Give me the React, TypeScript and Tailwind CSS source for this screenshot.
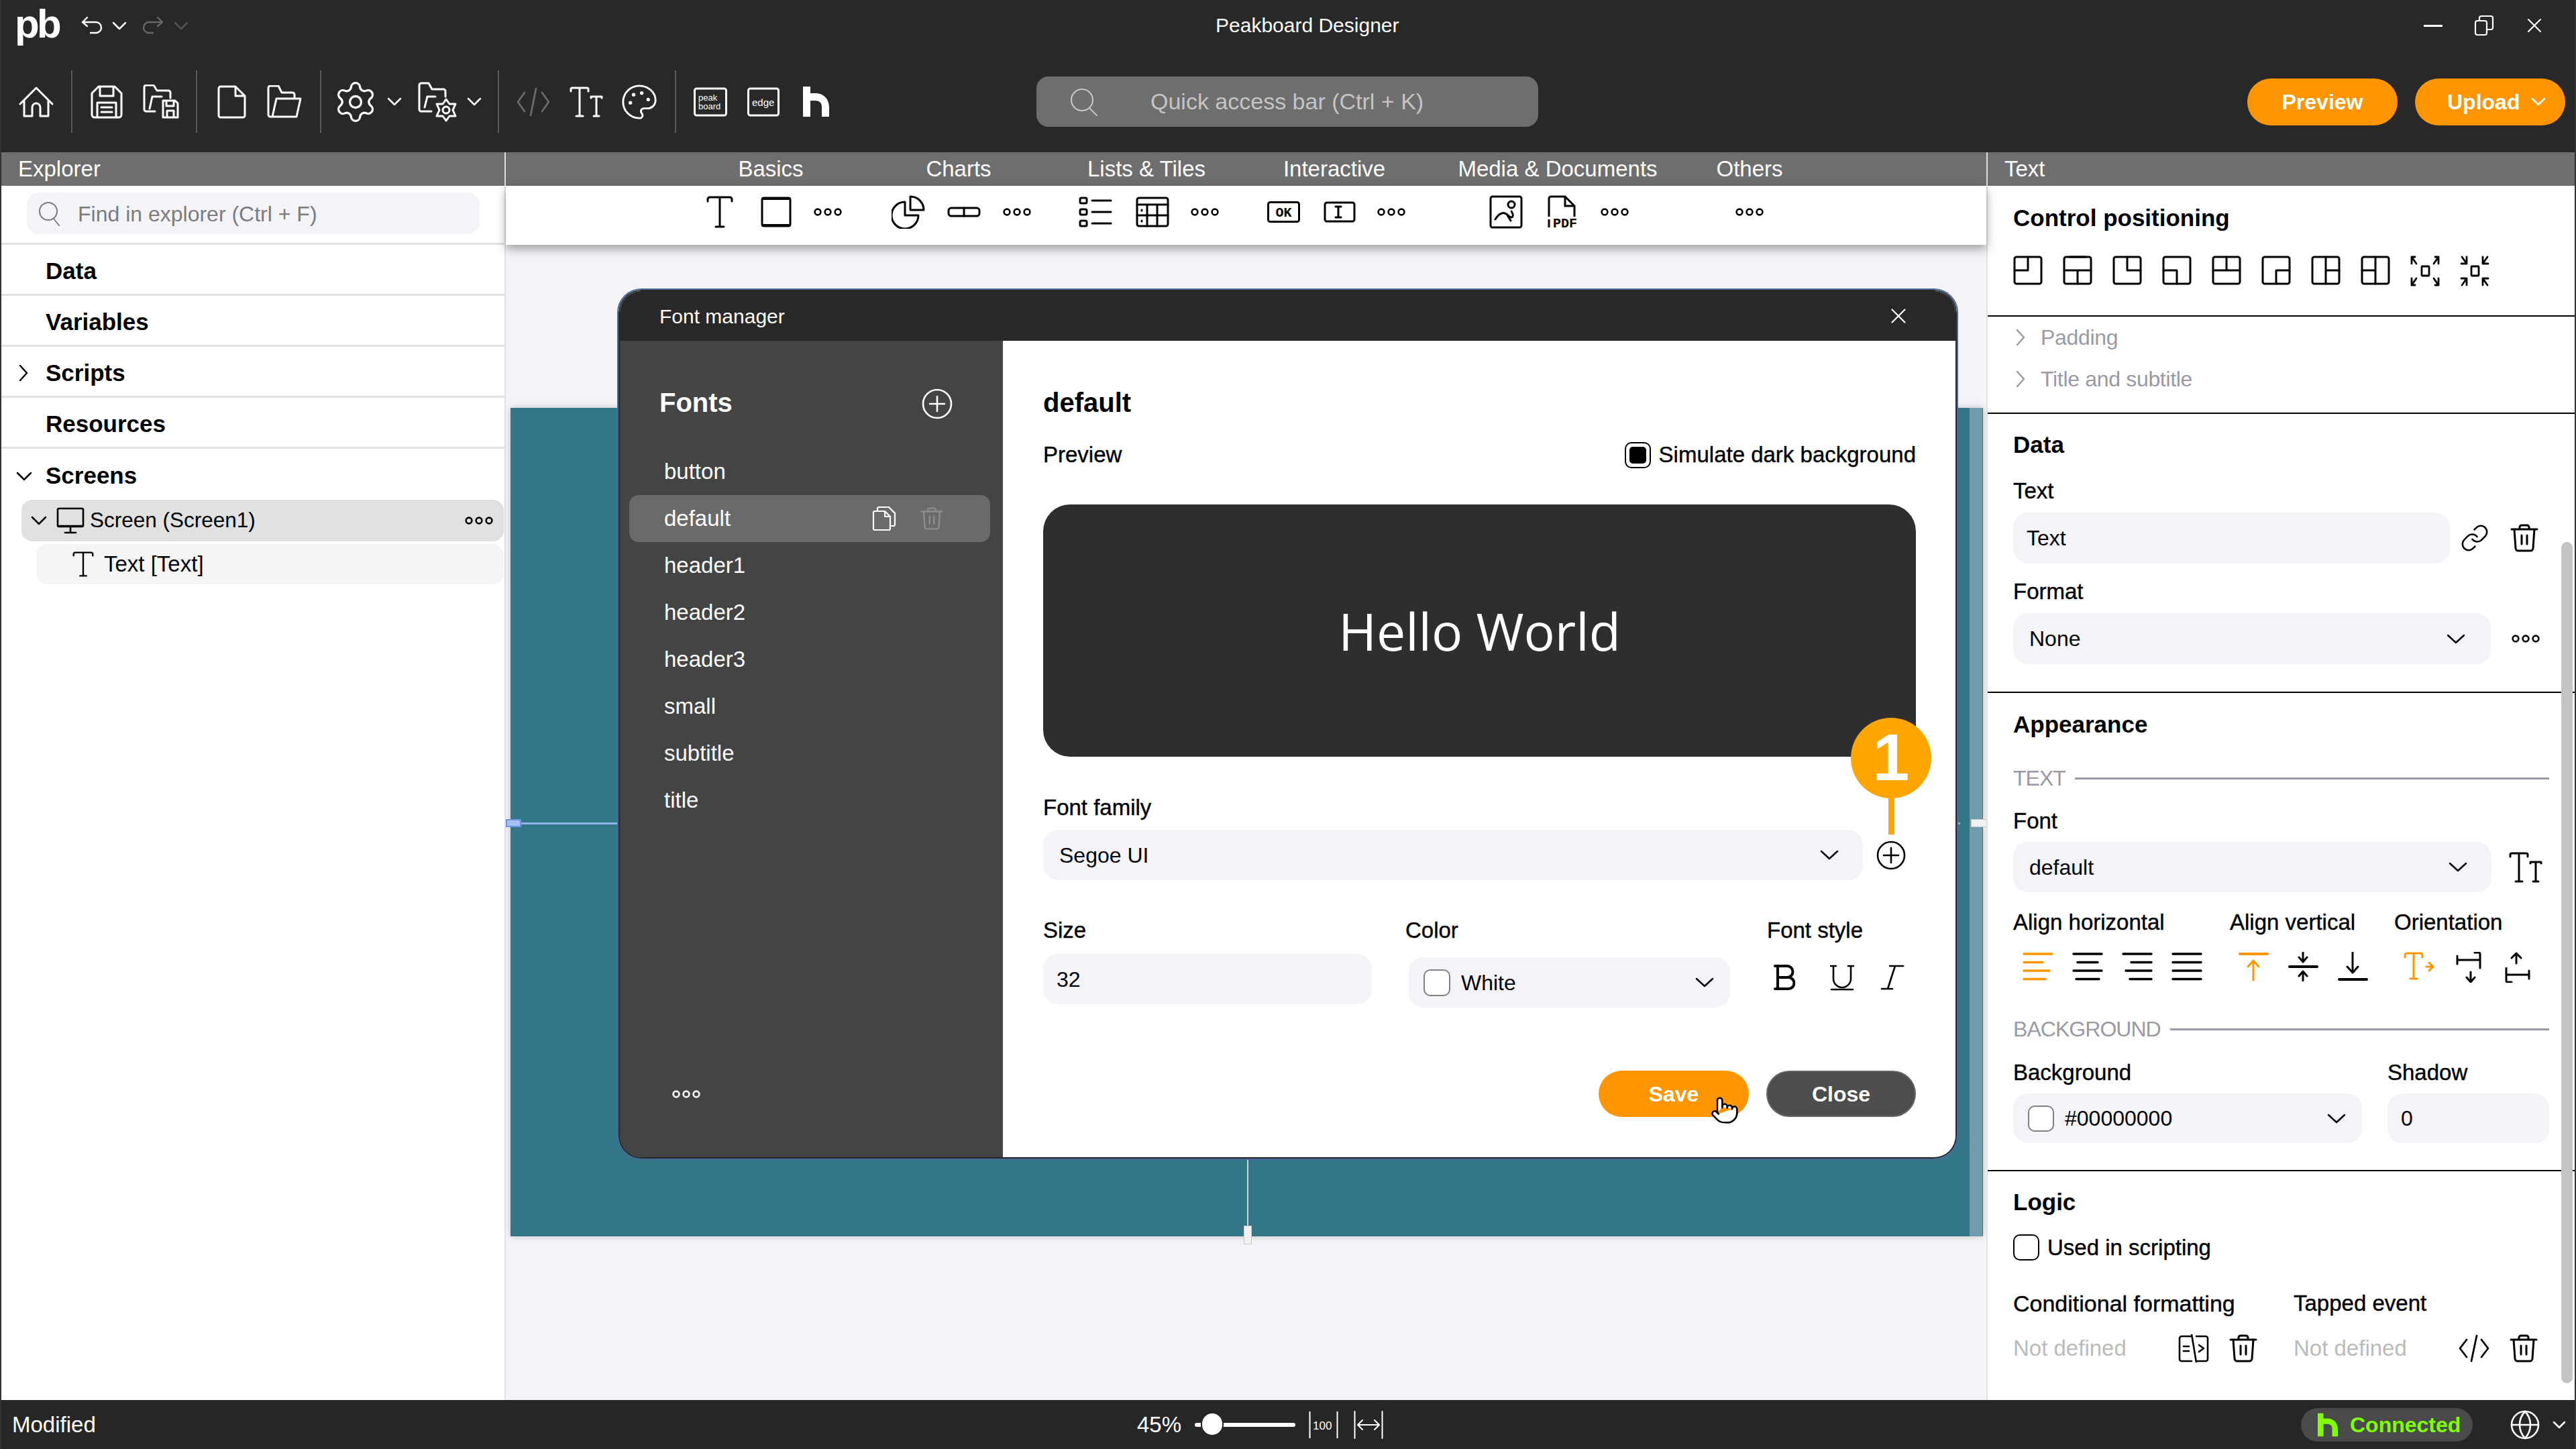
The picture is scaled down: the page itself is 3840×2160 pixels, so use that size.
import { Settings, Palette, Pointer, Globe, X, Link } from 'lucide-react';
import type { ReactNode } from 'react';

type IcoProps = { w: number; h: number; sw?: number; className?: string; children: ReactNode };

function Ico({ w, h, sw = 3, className = '', children }: IcoProps) {
  return (
    <svg
      width={w}
      height={h}
      viewBox={`0 0 ${w} ${h}`}
      fill="none"
      stroke="currentColor"
      strokeWidth={sw}
      strokeLinecap="round"
      strokeLinejoin="round"
      className={`shrink-0 ${className}`}
    >
      {children}
    </svg>
  );
}

function Chev({ w = 28, h = 15, className = '' }: { w?: number; h?: number; className?: string }) {
  return (
    <Ico w={w} h={h} sw={2.5} className={className}>
      <path d={`M2 2 L${w / 2} ${h - 2} L${w - 2} 2`} />
    </Ico>
  );
}

function ChevRight({ className = '' }: { className?: string }) {
  return (
    <Ico w={14} h={26} sw={2.5} className={className}>
      <path d="M2 2 L12 13 L2 24" />
    </Ico>
  );
}

function Dots({ className = '' }: { className?: string }) {
  return (
    <Ico w={42} h={14} sw={2.6} className={className}>
      <circle cx="6" cy="7" r="4.4" />
      <circle cx="21" cy="7" r="4.4" />
      <circle cx="36" cy="7" r="4.4" />
    </Ico>
  );
}

function Trash({ className = '' }: { className?: string }) {
  return (
    <svg width="42" height="42" viewBox="0 0 42 42" fill="none" stroke="currentColor" strokeWidth="3" strokeLinecap="round" strokeLinejoin="round" className={`shrink-0 ${className}`}>
      <path d="M2 8 H40 M14 8 V5 a3 3 0 0 1 3-3 H25 a3 3 0 0 1 3 3 V8 M6 8 L8 36 a4 4 0 0 0 4 4 H30 a4 4 0 0 0 4-4 L36 8 M17 17 V30 M25 17 V30" />
    </svg>
  );
}

function CirclePlus({ size = 44, className = '' }: { size?: number; className?: string }) {
  const c = size / 2;
  return (
    <Ico w={size} h={size} sw={2.6} className={className}>
      <circle cx={c} cy={c} r={c - 2} />
      <path d={`M${c} ${c - 11} V${c + 11} M${c - 11} ${c} H${c + 11}`} />
    </Ico>
  );
}

function HLogo({ className = '', w = 39, h = 45 }: { className?: string; w?: number; h?: number }) {
  return (
    <svg width={w} height={h} viewBox="0 0 39 45" fill="currentColor" className={`shrink-0 ${className}`}>
      <path d="M0 0 H11 V45 H0 Z M11 10 H19 C31 10 39 19 39 31 V45 H28 V30 C28 24 24 21 18 21 H11 Z" />
    </svg>
  );
}

function TextT({ className = '' }: { className?: string }) {
  return (
    <svg width="40" height="48" viewBox="0 0 40 48" fill="none" stroke="currentColor" strokeWidth="3" strokeLinecap="round" strokeLinejoin="round" className={`shrink-0 ${className}`}>
      <path d="M2 8 V5 a3 3 0 0 1 3-3 H35 a3 3 0 0 1 3 3 V8 M20 2 V46 M14 46 H26" />
    </svg>
  );
}

function TextTt({ className = '', w = 50, h = 46 }: { className?: string; w?: number; h?: number }) {
  return (
    <Ico w={w} h={h} className={className}>
      <path d="M2 7 V4 a2 2 0 0 1 2-2 H26 a2 2 0 0 1 2 2 V7 M15 2 V44 M10 44 H20" />
      <path d="M32 17 V15 H48 V17 M40 15 V44 M36 44 H44" />
    </Ico>
  );
}

function CodeIcon({ w = 50, h = 42, className = '' }: { w?: number; h?: number; className?: string }) {
  return (
    <Ico w={w} h={h} sw={2.8} className={className}>
      <path d={`M12 8 L2 ${h / 2} L12 ${h - 8} M${w - 12} 8 L${w - 2} ${h / 2} L${w - 12} ${h - 8} M${w / 2 + 4} 2 L${w / 2 - 4} ${h - 2}`} />
    </Ico>
  );
}

function MiniGear() {
  return (
    <g>
      <circle cx="42" cy="42" r="5" />
      <path d="M42 26 L47 33 L56 33 L52 42 L56 51 L47 51 L42 58 L37 51 L28 51 L32 42 L28 33 L37 33 Z" />
    </g>
  );
}

function Separator() {
  return <div className="h-[93px] w-[2px] shrink-0 bg-[#5a5a5a]" />;
}

function Swatch({ className = '' }: { className?: string }) {
  return <div className={`shrink-0 rounded-[10px] border-2 border-[#808080] bg-white ${className}`} />;
}

function TopBars() {
  return (
    <div className="bg-[#282828] text-white">
      <div className="flex h-[76px] items-center">
        <div className="flex w-[1810px] items-center">
          <span className="ml-[20px] mt-[-4px] text-[60px] font-bold leading-[70px] tracking-[-0.06em]">pb</span>
          <Ico w={32} h={27} sw={2.4} className="ml-[33px] mt-[-2px]">
            <path d="M9 2 L2 9 L9 15 M2 9 H22 a8 8 0 0 1 0 16 H14" />
          </Ico>
          <Chev w={22} h={13} className="ml-[14px]" />
          <Ico w={32} h={27} sw={2.4} className="ml-[23px] mt-[-2px] text-[#666]">
            <path d="M23 2 L30 9 L23 15 M30 9 H10 a8 8 0 0 0 0 16 H16" />
          </Ico>
          <Chev w={22} h={13} className="ml-[15px] text-[#555]" />
        </div>
        <span className="text-[30px] leading-[40px]">Peakboard Designer</span>
        <div className="ml-auto flex items-center pr-[42px]">
          <div className="h-[3px] w-[28px] bg-white" />
          <Ico w={30} h={32} sw={2.2} className="ml-[47px]">
            <rect x="2" y="9" width="17" height="21" rx="3" />
            <path d="M8 9 V5 a3 3 0 0 1 3-3 H25 a3 3 0 0 1 3 3 V19 a3 3 0 0 1-3 3 H19" />
          </Ico>
          <X size={36} strokeWidth={1.4} className="ml-[42px]" />
        </div>
      </div>
      <div className="flex h-[151px] items-center">
        <div className="flex w-[1543px] items-center">
          <Ico w={52} h={46} className="ml-[26px]">
            <path d="M2 26 L26 2 L50 26 M8 20 V44 H20 V31 a6 6 0 0 1 12 0 V44 H44 V20" />
          </Ico>
          <div className="ml-[26px]"><Separator /></div>
          <Ico w={48} h={50} className="ml-[27px]">
            <path d="M12 2 H36 L46 12 V44 a4 4 0 0 1-4 4 H6 a4 4 0 0 1-4-4 V12 Z M14 2 V16 H34 V2 M10 48 V26 H38 V48 M16 33 H32 M16 40 H32" />
          </Ico>
          <Ico w={54} h={52} className="ml-[30px]">
            <path d="M18 40 H5 a3 3 0 0 1-3-3 V4 a3 3 0 0 1 3-3 H16 L21 9 H38 a3 3 0 0 1 3 3 V20 M10 36 L14 18 H28" />
            <path d="M30 24 H48 L52 28 V49 H30 Z M35 24 V32 H46 V24 M36 49 V39 H46 V49" />
          </Ico>
          <div className="ml-[25px]"><Separator /></div>
          <Ico w={44} h={50} className="ml-[29px]">
            <path d="M3 5 a3 3 0 0 1 3-3 H28 L42 16 V45 a3 3 0 0 1-3 3 H6 a3 3 0 0 1-3-3 Z M28 2 V16 H42" />
          </Ico>
          <Ico w={52} h={50} className="ml-[31px]">
            <path d="M8 47 H5 a3 3 0 0 1-3-3 V4 a3 3 0 0 1 3-3 H17 L22 11 H38 a3 3 0 0 1 3 3 V20 M8 47 L14 20 H50 L44 47 Z" />
          </Ico>
          <div className="ml-[27px]"><Separator /></div>
          <Settings size={68} strokeWidth={1.15} className="ml-[17px] shrink-0" />
          <Chev w={22} h={13} className="ml-[13px]" />
          <Ico w={60} h={60} className="ml-[24px]">
            <path d="M20 44 H5 a3 3 0 0 1-3-3 V5 a3 3 0 0 1 3-3 H16 L21 11 H38 a3 3 0 0 1 3 3 V22 M10 38 L14 22 H26" />
            <MiniGear />
          </Ico>
          <Chev w={22} h={13} className="ml-[13px]" />
          <div className="ml-[24px]"><Separator /></div>
          <CodeIcon w={50} h={44} className="ml-[26px] text-[#6a6a6a]" />
          <TextTt w={52} h={46} className="ml-[29px]" />
          <Palette size={58} strokeWidth={1.2} className="ml-[23px] shrink-0" />
          <div className="ml-[24px]"><Separator /></div>
          <svg width="50" height="44" viewBox="0 0 50 44" className="ml-[26px] shrink-0">
            <path d="M1.5 5 a3 3 0 0 1 3-3 H45.5 a3 3 0 0 1 3 3 V39 a3 3 0 0 1-3 3 H4.5 a3 3 0 0 1-3-3 Z" fill="none" stroke="currentColor" strokeWidth="3" />
            <text x="7" y="20" fontSize="13" fill="currentColor" fontFamily="Liberation Sans">peak</text>
            <text x="7" y="33" fontSize="13" fill="currentColor" fontFamily="Liberation Sans">board</text>
          </svg>
          <svg width="48" height="44" viewBox="0 0 48 44" className="ml-[30px] shrink-0">
            <path d="M1.5 5 a3 3 0 0 1 3-3 H43.5 a3 3 0 0 1 3 3 V39 a3 3 0 0 1-3 3 H4.5 a3 3 0 0 1-3-3 Z" fill="none" stroke="currentColor" strokeWidth="3" />
            <text x="7" y="28" fontSize="15" fill="currentColor" fontFamily="Liberation Sans">edge</text>
          </svg>
          <HLogo className="ml-[35px]" />
        </div>
        <div className="flex h-[75px] w-[748px] items-center rounded-[18px] bg-[#6e6e6e] text-[#c4c4c4]">
          <Ico w={42} h={42} sw={2.2} className="ml-[50px]">
            <circle cx="18" cy="18" r="16" />
            <path d="M29 30 L40 41" />
          </Ico>
          <span className="ml-[78px] text-[34px]">Quick access bar (Ctrl + K)</span>
        </div>
        <div className="ml-auto flex items-center gap-[26px] pr-[14px] font-bold">
          <div className="flex h-[70px] w-[224px] items-center justify-center rounded-full bg-[#ff9500] text-[32px]">Preview</div>
          <div className="flex h-[70px] w-[224px] items-center gap-[17px] rounded-full bg-[#ff9500] pl-[48px] text-[32px]">
            Upload
            <Chev w={22} h={13} />
          </div>
        </div>
      </div>
    </div>
  );
}

const groups = ['Basics', 'Charts', 'Lists & Tiles', 'Interactive', 'Media & Documents', 'Others'];

function PanelHeaders() {
  return (
    <div className="flex h-[50px] bg-[#6e6e6e] text-[33px] leading-[50px] text-white">
      <div className="w-[752px] border-r-2 border-[#ddd] pl-[25px]">Explorer</div>
      <div className="grid w-[2207px] grid-cols-[280px_280px_280px_280px_386px_186px] pl-[255px]">
        {groups.map((g) => (
          <div key={g} className="text-center">{g}</div>
        ))}
      </div>
      <div className="flex-1 border-l-2 border-[#ddd] pl-[25px]">Text</div>
    </div>
  );
}

function Toolbox() {
  return (
    <div className="relative z-10 grid h-[88px] grid-cols-[280px_280px_280px_280px_386px_186px] bg-white pl-[255px] text-black shadow-[0_6px_14px_rgba(0,0,0,0.35)]">
      <div className="flex items-center gap-[35px] pb-[10px] pl-[44px]">
        <TextT />
        <Ico w={46} h={46} className="ml-[6px]">
          <rect x="2" y="2" width="42" height="42" rx="3" />
          <path d="M3 3 H43 M3 43 H43" strokeWidth="4" />
        </Ico>
        <Dots className="ml-[-2px]" />
      </div>
      <div className="flex items-center gap-[33px] pb-[10px] pl-[40px]">
        <Ico w={50} h={50}>
          <path d="M20 10 A20 20 0 1 0 40 30 H20 Z M28 2 A20 20 0 0 1 48 22 H28 Z" />
        </Ico>
        <Ico w={50} h={16}>
          <rect x="2" y="2" width="46" height="12" rx="4" />
          <path d="M25 2 V14" />
        </Ico>
        <Dots />
      </div>
      <div className="flex items-center gap-[35px] pb-[10px] pl-[39px]">
        <Ico w={50} h={46}>
          <rect x="2" y="2" width="10" height="8" rx="2" />
          <rect x="2" y="19" width="10" height="8" rx="2" />
          <rect x="2" y="36" width="10" height="8" rx="2" />
          <path d="M20 6 H48 M20 23 H48 M20 40 H48" />
        </Ico>
        <Ico w={50} h={46}>
          <rect x="2" y="2" width="46" height="42" rx="3" />
          <path d="M2 12 H48 M2 28 H48 M17 12 V44 M32 12 V44 M9 20 V21 M9 36 V37" />
        </Ico>
        <Dots className="ml-[-3px]" />
      </div>
      <div className="flex items-center gap-[35px] pb-[10px] pl-[40px]">
        <svg width="49" height="32" viewBox="0 0 49 32" className="shrink-0">
          <rect x="1.5" y="1.5" width="46" height="29" rx="3" fill="none" stroke="currentColor" strokeWidth="3" />
          <text x="24.5" y="23" textAnchor="middle" fontSize="20" fontWeight="700" fontFamily="Liberation Mono" fill="currentColor">OK</text>
        </svg>
        <Ico w={48} h={32}>
          <rect x="2" y="2" width="44" height="28" rx="3" />
          <path d="M18 8 H26 M18 24 H26 M22 8 V24" />
        </Ico>
        <Dots className="ml-[-3px]" />
      </div>
      <div className="flex items-center gap-[35px] pb-[10px] pl-[91px]">
        <Ico w={50} h={50}>
          <rect x="2" y="2" width="46" height="46" rx="3" />
          <circle cx="33" cy="14" r="5" />
          <path d="M9 36 C15 26 22 24 28 30 C34 36 38 32 33 24 M27 30 L32 38" />
        </Ico>
        <svg width="50" height="56" viewBox="0 0 50 56" className="mt-[6px] shrink-0">
          <path d="M4 32 V5 a3 3 0 0 1 3-3 H28 L42 16 V32 M28 2 V16 H42 M4 36 V48" fill="none" stroke="currentColor" strokeWidth="3" />
          <text x="10" y="48" fontSize="20" fontWeight="700" fontFamily="Liberation Mono" fill="currentColor">PDF</text>
        </svg>
        <Dots className="ml-[-4px]" />
      </div>
      <div className="flex items-center pb-[10px] pl-[72px]">
        <Dots />
      </div>
    </div>
  );
}

function ExplorerRow({ label, icon }: { label: string; icon?: ReactNode }) {
  return (
    <div className="relative flex h-[76px] items-center border-b-[3px] border-[#e2e2e2] pl-[66px] pt-[5px] text-[35px] font-bold">
      {icon}
      {label}
    </div>
  );
}

function Explorer() {
  return (
    <aside className="flex w-[752px] shrink-0 flex-col border-r-2 border-[#e2e2e2] bg-white text-black">
      <div className="flex h-[88px] items-center border-b-[3px] border-[#e2e2e2] pb-[3px] pl-[38px]">
        <div className="flex h-[62px] w-[675px] items-center rounded-[18px] bg-[#f3f3f8] text-[#7c7c7c]">
          <Ico w={34} h={38} sw={2} className="ml-[16px]">
            <circle cx="16" cy="16" r="13" />
            <path d="M24 27 L32 37" />
          </Ico>
          <span className="ml-[26px] mt-[2px] text-[32px]">Find in explorer (Ctrl + F)</span>
        </div>
      </div>
      <ExplorerRow label="Data" />
      <ExplorerRow label="Variables" />
      <ExplorerRow label="Scripts" icon={<ChevRight className="absolute left-[26px]" />} />
      <ExplorerRow label="Resources" />
      <div className="flex h-[76px] items-center pl-[22px] pt-[5px] text-[35px] font-bold">
        <Chev w={24} h={14} className="mr-[20px]" />
        Screens
      </div>
      <div className="ml-[30px] mr-[1px] flex h-[62px] items-center rounded-[16px] bg-[#e1e1e1] pl-[14px] pr-[16px] text-[31.5px]">
        <Chev w={24} h={14} />
        <Ico w={42} h={40} sw={2.6} className="ml-[14px]">
          <rect x="2" y="2" width="38" height="27" rx="2" />
          <path d="M3 28 H39 M21 30 V38 M13 38 H29" />
        </Ico>
        <span className="ml-[8px]">Screen (Screen1)</span>
        <Dots className="ml-auto" />
      </div>
      <div className="ml-[52px] mr-[1px] mt-[4px] flex h-[60px] items-center rounded-[16px] bg-[#f5f5f5] pl-[54px] text-[33px]">
        <TextT className="h-[38px] w-[32px]" />
        <span className="ml-[15px]">Text [Text]</span>
      </div>
    </aside>
  );
}

function FontManager() {
  const fonts = ['button', 'default', 'header1', 'header2', 'header3', 'small', 'subtitle', 'title'];
  return (
    <div className="absolute left-[166px] top-[153px] z-20 h-[1299px] w-[1999px] overflow-hidden rounded-[36px] border-2 border-[#4b6a99] text-black">
      <div className="flex h-full flex-col overflow-hidden rounded-[34px] border-2 border-[#282828]">
        <div className="flex h-[74px] shrink-0 items-center justify-between bg-[#282828] pl-[59px] pr-[66px] text-[30px] text-white">
          Font manager
          <X size={38} strokeWidth={1.4} />
        </div>
        <div className="flex min-h-0 flex-1">
          <div className="flex w-[571px] flex-col bg-[#444444] pt-[69px] text-white">
            <div className="flex h-[46px] items-center justify-between pl-[59px] pr-[75px]">
              <span className="text-[40px] font-bold">Fonts</span>
              <CirclePlus size={46} className="mt-[4px]" />
            </div>
            <div className="ml-[14px] mr-[19px] mt-[45px] flex flex-col">
              {fonts.map((f) => (
                <div
                  key={f}
                  className={`flex h-[70px] items-center rounded-[14px] pl-[52px] pr-[70px] text-[33px] ${f === 'default' ? 'bg-[#6a6a6a]' : ''}`}
                >
                  {f}
                  {f === 'default' && (
                    <div className="ml-auto flex items-center gap-[34px]">
                      <Ico w={38} h={38} sw={2.2}>
                        <path d="M8 8 V4 a2 2 0 0 1 2-2 H25 L34 11 V28 a2 2 0 0 1-2 2 H29" />
                        <path d="M2 10 a2 2 0 0 1 2-2 H19 L27 16 V34 a2 2 0 0 1-2 2 H4 a2 2 0 0 1-2-2 Z M19 8 V16 H27" />
                      </Ico>
                      <Trash className="h-[34px] w-[34px] text-[#8c8c8c]" />
                    </div>
                  )}
                </div>
              ))}
            </div>
            <Dots className="mb-[87px] ml-[78px] mt-auto" />
          </div>
          <div className="flex flex-1 flex-col bg-white pl-[60px] pr-[59px] pt-[69px]">
            <div className="h-[46px] text-[40px] font-bold leading-[46px]">default</div>
            <div className="mt-[35px] flex h-[40px] items-center text-[33px] [-webkit-text-stroke:0.4px]">
              Preview
              <div className="ml-auto flex h-[39px] w-[39px] items-center justify-center rounded-[10px] border-2 border-black">
                <div className="h-[25px] w-[25px] rounded-[5px] bg-black" />
              </div>
              <span className="ml-[12px]">Simulate dark background</span>
            </div>
            <div className="mt-[54px] flex h-[376px] items-center justify-center rounded-[40px] bg-[#2e2e2e] pt-[2px] font-['Open_Sans',sans-serif] text-[77px] text-white">
              Hello World
            </div>
            <Label className="mt-[56px]">Font family</Label>
            <div className="mt-[13px] flex items-center">
              <div className="flex h-[75px] w-[1222px] items-center rounded-[22px] bg-[#f3f3f8] pl-[24px] pr-[36px] text-[32px]">
                Segoe UI
                <Chev className="ml-auto" />
              </div>
              <div className="relative ml-[20px]">
                <CirclePlus size={44} />
                <div className="absolute left-1/2 top-[-183px] flex w-[120px] -translate-x-1/2 flex-col items-center">
                  <div className="flex h-[120px] w-[120px] items-center justify-center rounded-full bg-[#ffa500] text-[98px] font-bold text-white">1</div>
                  <div className="h-[54px] w-[9px] bg-[#ffa500]" />
                </div>
              </div>
            </div>
            <div className="mt-[55px] flex h-[135px]">
              <div className="w-[540px]">
                <Label>Size</Label>
                <div className="mt-[15px] flex h-[75px] w-[490px] items-center rounded-[22px] bg-[#f3f3f8] pl-[20px] text-[32px]">32</div>
              </div>
              <div className="w-[539px]">
                <Label>Color</Label>
                <div className="ml-[5px] mt-[20px] flex h-[75px] w-[479px] items-center rounded-[22px] bg-[#f3f3f8] pl-[22px] pr-[24px] text-[32px]">
                  <Swatch className="h-[40px] w-[40px]" />
                  <span className="ml-[16px]">White</span>
                  <Chev className="ml-auto" />
                </div>
              </div>
              <div>
                <Label>Font style</Label>
                <div className="ml-[10px] mt-[30px] flex items-center">
                  <Ico w={32} h={38}>
                    <path d="M2 2 H20 a8 8 0 0 1 0 17 H6 M6 19 H22 a8 8 0 0 1 0 17 H2 M6 2 V36" strokeWidth="4" />
                  </Ico>
                  <Ico w={36} h={40} sw={2.6} className="ml-[52px]">
                    <path d="M5 3 V22 a13 13 0 0 0 26 0 V3 M1 3 H9 M27 3 H35 M2 38 H34" />
                  </Ico>
                  <Ico w={38} h={40} sw={2.6} className="ml-[37px]">
                    <path d="M24 3 L13 37 M16 3 H36 M4 37 H20" />
                  </Ico>
                </div>
              </div>
            </div>
            <div className="mt-[94px] flex justify-end gap-[26px] text-[32px] font-bold text-white">
              <div className="relative flex h-[69px] w-[224px] items-center justify-center rounded-full bg-[#ff9500]">
                Save
                <Pointer size={44} strokeWidth={1.4} fill="white" className="absolute left-[166px] top-[37px] text-black" />
              </div>
              <div className="flex h-[69px] w-[223px] items-center justify-center rounded-full border-2 border-[#666] bg-[#4d4d4d]">Close</div>
            </div>
          </div>
        </div>
      </div>
    </div>
  );
}

function Canvas() {
  return (
    <main className="relative min-w-0 flex-1 bg-[#f3f3f8]">
      <Toolbox />
      <div className="pl-[7px] pr-[5px] pt-[243px]">
        <div className="relative h-[1235px] bg-[#337688] shadow-[0_0_10px_rgba(0,0,0,0.2)]">
          <div className="absolute inset-y-0 right-[1px] w-[19px] bg-[#6f9dab]" />
          <div className="absolute left-[16px] right-[34px] top-[618px] h-[3px] bg-[#8fb4e8]" />
          <div className="absolute left-[-7px] top-[613px] h-[12px] w-[23px] border-2 border-[#6a96e8] bg-[#a7c0f5]" />
          <div className="absolute right-[-6px] top-[613px] h-[12px] w-[24px] border border-[#c8c8c8] bg-[#f0f0f0]" />
          <div className="absolute left-[1098px] top-[1121px] h-[98px] w-[2px] bg-[#c8d4d8]" />
          <div className="absolute left-[1093px] top-[1219px] h-[28px] w-[12px] border border-[#c8c8c8] bg-[#f0f0f0]" />
        </div>
      </div>
      <FontManager />
    </main>
  );
}

function SectionTitle({ children }: { children: ReactNode }) {
  return <div className="h-[40px] text-[35px] font-bold leading-[40px]">{children}</div>;
}

function Label({ children, className = '' }: { children: ReactNode; className?: string }) {
  return <div className={`h-[40px] text-[33px] leading-[40px] [-webkit-text-stroke:0.4px] ${className}`}>{children}</div>;
}

function SubHead({ children }: { children: ReactNode }) {
  return (
    <div className="flex h-[40px] items-center gap-[14px] pr-[38px] text-[32px] tracking-[-0.03em] text-[#9a9aa5]">
      {children}
      <div className="h-[3px] flex-1 bg-[#9a9aa5]" />
    </div>
  );
}

function Frame({ d }: { d: string }) {
  return (
    <Ico w={44} h={44}>
      <rect x="2" y="2" width="40" height="40" rx="3" />
      <path d={d} />
    </Ico>
  );
}

function AlignLines({ rows, className = '' }: { rows: [number, number][]; className?: string }) {
  return (
    <Ico w={46} h={44} sw={3.4} className={className}>
      {rows.map(([a, b], i) => (
        <path key={i} d={`M${a} ${3 + i * 12.5} H${b}`} />
      ))}
    </Ico>
  );
}

function Properties() {
  return (
    <aside className="relative flex w-[877px] shrink-0 flex-col overflow-hidden border-l-2 border-[#e2e2e2] bg-white pb-0 text-black">
      <div className="absolute right-[3px] top-[531px] z-10 h-[1254px] w-[17px] rounded-full bg-[#c4c4c4]" />
      <section className="h-[195px] border-b-[2px] border-black pl-[38px] pt-[28px]">
        <SectionTitle>Control positioning</SectionTitle>
        <div className="mt-[36px] flex gap-[30px]">
          <Frame d="M22 2 V22 H2" />
          <Frame d="M2 22 H42 M22 22 V42 M10 2 H34" />
          <Frame d="M22 2 V22 H42" />
          <Frame d="M2 22 H22 V42" />
          <Frame d="M22 2 V22 M2 22 H42" />
          <Frame d="M42 22 H22 V42" />
          <Frame d="M22 2 V42 M22 22 H42" />
          <Frame d="M22 2 V42 M22 22 H2" />
          <Ico w={44} h={46} sw={2.8}>
            <rect x="17" y="16" width="11" height="14" rx="1" />
            <path d="M2 2 V12 M2 2 H7 M2 2 L9 12 M42 2 V12 M42 2 H37 M42 2 L35 12 M2 44 V34 M2 44 H7 M2 44 L9 34 M42 44 V34 M42 44 H37 M42 44 L35 34" />
          </Ico>
          <Ico w={44} h={46} sw={2.8}>
            <rect x="17" y="16" width="11" height="14" rx="1" />
            <path d="M10 12 V2 M10 12 H2 M10 12 L3 2 M34 12 V2 M34 12 H42 M34 12 L41 2 M10 34 V44 M10 34 H2 M10 34 L3 44 M34 34 V44 M34 34 H42 M34 34 L41 44" />
          </Ico>
        </div>
      </section>
      <section className="h-[145px] border-b-[2px] border-black pl-[42px] text-[32px] tracking-[-0.01em] text-[#9a9aa5]">
        <div className="flex h-[62px] items-center gap-[23px]"><ChevRight />Padding</div>
        <div className="flex h-[62px] items-center gap-[23px]"><ChevRight />Title and subtitle</div>
      </section>
      <section className="h-[416px] border-b-[2px] border-black pl-[38px] pt-[26px]">
        <SectionTitle>Data</SectionTitle>
        <Label className="mt-[29px]">Text</Label>
        <div className="mt-[12px] flex items-center">
          <div className="flex h-[76px] w-[651px] items-center rounded-[22px] bg-[#f3f3f8] pl-[20px] text-[32px]">Text</div>
          <Link size={44} strokeWidth={1.4} className="ml-[15px] shrink-0" />
          <Trash className="ml-[31px]" />
        </div>
        <Label className="mt-[22px]">Format</Label>
        <div className="mt-[12px] flex items-center">
          <div className="flex h-[76px] w-[712px] items-center rounded-[22px] bg-[#f3f3f8] pl-[24px] pr-[38px] text-[32px]">
            None
            <Chev className="ml-auto" />
          </div>
          <Dots className="ml-[31px]" />
        </div>
      </section>
      <section className="h-[713px] border-b-[2px] border-black pl-[38px] pt-[27px]">
        <SectionTitle>Appearance</SectionTitle>
        <div className="mt-[40px]"><SubHead>TEXT</SubHead></div>
        <Label className="mt-[24px]">Font</Label>
        <div className="mt-[11px] flex items-center">
          <div className="flex h-[75px] w-[713px] items-center rounded-[22px] bg-[#f3f3f8] pl-[24px] pr-[36px] text-[32px]">
            default
            <Chev className="ml-auto" />
          </div>
          <TextTt className="ml-[26px]" />
        </div>
        <div className="mt-[25px] flex">
          <div className="w-[323px]">
            <Label>Align horizontal</Label>
            <div className="mt-[24px] flex gap-[28px] pl-[14px]">
              <AlignLines className="text-[#ff9500]" rows={[[2, 44], [2, 30], [2, 40], [2, 34], [2, 38]]} />
              <AlignLines rows={[[2, 44], [8, 38], [2, 44], [6, 40], [6, 40]]} />
              <AlignLines rows={[[2, 44], [14, 44], [6, 44], [12, 44], [8, 44]]} />
              <AlignLines rows={[[2, 44], [2, 44], [2, 44], [2, 44], [2, 32]]} />
            </div>
          </div>
          <div className="w-[245px]">
            <Label>Align vertical</Label>
            <div className="mt-[24px] flex gap-[29px] pl-[13px]">
              <Ico w={45} h={44} className="text-[#ff9500]">
                <path d="M2 3 H43" strokeWidth="4" />
                <path d="M22 42 V14 M14 22 L22 13 L30 22" />
              </Ico>
              <Ico w={45} h={44}>
                <path d="M2 22 H43" strokeWidth="4" />
                <path d="M22 1 V14 M16 8 L22 15 L28 8 M22 43 V30 M16 36 L22 29 L28 36" />
              </Ico>
              <Ico w={45} h={44}>
                <path d="M2 41 H43" strokeWidth="4" />
                <path d="M22 1 V30 M14 22 L22 31 L30 22" />
              </Ico>
            </div>
          </div>
          <div>
            <Label>Orientation</Label>
            <div className="mt-[24px] flex items-start pl-[14px]">
              <Ico w={46} h={44} className="text-[#ff9500]">
                <path d="M2 8 V5 a3 3 0 0 1 3-3 H25 a3 3 0 0 1 3 3 V8 M15 2 V40 M10 40 H20 M34 22 H44 M38 16 L44 22 L38 28" />
              </Ico>
              <Ico w={38} h={46} className="ml-[32px]">
                <path d="M2 6 V18 M2 12 H34 M28 1 H34 a2 2 0 0 1 2 2 V24 M22 30 V45 M16 38 L22 45 L28 38" />
              </Ico>
              <Ico w={38} h={46} className="ml-[35px]">
                <path d="M36 28 V40 M4 34 H36 M10 45 H4 a2 2 0 0 1-2-2 V24 M17 17 V2 M10 9 L17 2 L24 9" />
              </Ico>
            </div>
          </div>
        </div>
        <div className="mt-[49px]"><SubHead>BACKGROUND</SubHead></div>
        <div className="mt-[25px] flex">
          <div className="w-[558px]">
            <Label>Background</Label>
            <div className="mt-[11px] flex h-[74px] w-[520px] items-center rounded-[22px] bg-[#f3f3f8] pl-[22px] pr-[24px] text-[32px]">
              <Swatch className="h-[39px] w-[39px]" />
              <span className="ml-[16px]">#00000000</span>
              <Chev className="ml-auto" />
            </div>
          </div>
          <div>
            <Label>Shadow</Label>
            <div className="mt-[11px] flex h-[74px] w-[241px] items-center rounded-[22px] bg-[#f3f3f8] pl-[20px] text-[32px]">0</div>
          </div>
        </div>
      </section>
      <section className="flex-1 pl-[38px] pt-[26px]">
        <SectionTitle>Logic</SectionTitle>
        <div className="mt-[28px] flex h-[39px] items-center text-[33px] [-webkit-text-stroke:0.4px]">
          <div className="h-[39px] w-[39px] rounded-[10px] border-2 border-black" />
          <span className="ml-[12px]">Used in scripting</span>
        </div>
        <div className="mt-[44px] flex">
          <div className="w-[418px]">
            <Label className="!text-[34px]">Conditional formatting</Label>
            <div className="mt-[26px] flex h-[42px] items-center text-[33px] text-[#bbbbbb]">
              <span className="w-[246px]">Not defined</span>
              <Ico w={46} h={42} sw={2.6} className="text-black">
                <path d="M20 3 H5 a3 3 0 0 0-3 3 V37 a3 3 0 0 0 3 3 H20 M27 3 H41 a3 3 0 0 1 3 3 V37 a3 3 0 0 1-3 3 H27 M20 0 L27 42 M8 18 H16 M8 25 H16 M31 16 L38 21 L31 26" />
              </Ico>
              <Trash className="ml-[30px] text-black" />
            </div>
          </div>
          <div>
            <Label>Tapped event</Label>
            <div className="mt-[26px] flex h-[42px] items-center text-[33px] text-[#bbbbbb]">
              <span className="w-[246px]">Not defined</span>
              <CodeIcon w={46} h={42} className="text-black" />
              <Trash className="ml-[30px] text-black" />
            </div>
          </div>
        </div>
      </section>
    </aside>
  );
}

function StatusBar() {
  return (
    <footer className="flex h-[73px] shrink-0 items-center bg-[#262626] text-[33px] text-white">
      <div className="w-[1693px] pl-[16px]">Modified</div>
      <span className="w-[86px]">45%</span>
      <div className="relative h-[6px] w-[150px] rounded-full bg-white">
        <div className="absolute left-[9px] top-[-16px] h-[36px] w-[34px] rounded-full border-2 border-[#262626] bg-white" />
      </div>
      <svg width="44" height="42" viewBox="0 0 44 42" className="ml-[20px] shrink-0">
        <path d="M1.5 1 V41 M42.5 1 V41" stroke="currentColor" strokeWidth="2" />
        <text x="6" y="28" fontSize="17" fontFamily="Liberation Sans" fill="currentColor">100</text>
      </svg>
      <Ico w={44} h={42} sw={2} className="ml-[23px]">
        <path d="M1.5 1 V41 M42.5 1 V41 M6 21 H38 M13 14 L6 21 L13 28 M31 14 L38 21 L31 28" />
      </Ico>
      <div className="ml-auto flex h-[50px] w-[256px] items-center rounded-full bg-[#4a4a4a] pl-[25px] font-bold text-[#7fff00]">
        <HLogo w={30} h={36} />
        <span className="ml-[18px] text-[32px]">Connected</span>
      </div>
      <Globe size={48} strokeWidth={1.3} className="ml-[54px] shrink-0" />
      <Chev w={20} h={12} className="ml-[17px] mr-[13px]" />
    </footer>
  );
}

export default function App() {
  return (
    <div className="flex h-[2160px] w-[3840px] flex-col overflow-hidden border-x-2 border-[#333] font-['Liberation_Sans',Arial,sans-serif]">
      <TopBars />
      <PanelHeaders />
      <div className="flex min-h-0 flex-1">
        <Explorer />
        <Canvas />
        <Properties />
      </div>
      <StatusBar />
    </div>
  );
}
